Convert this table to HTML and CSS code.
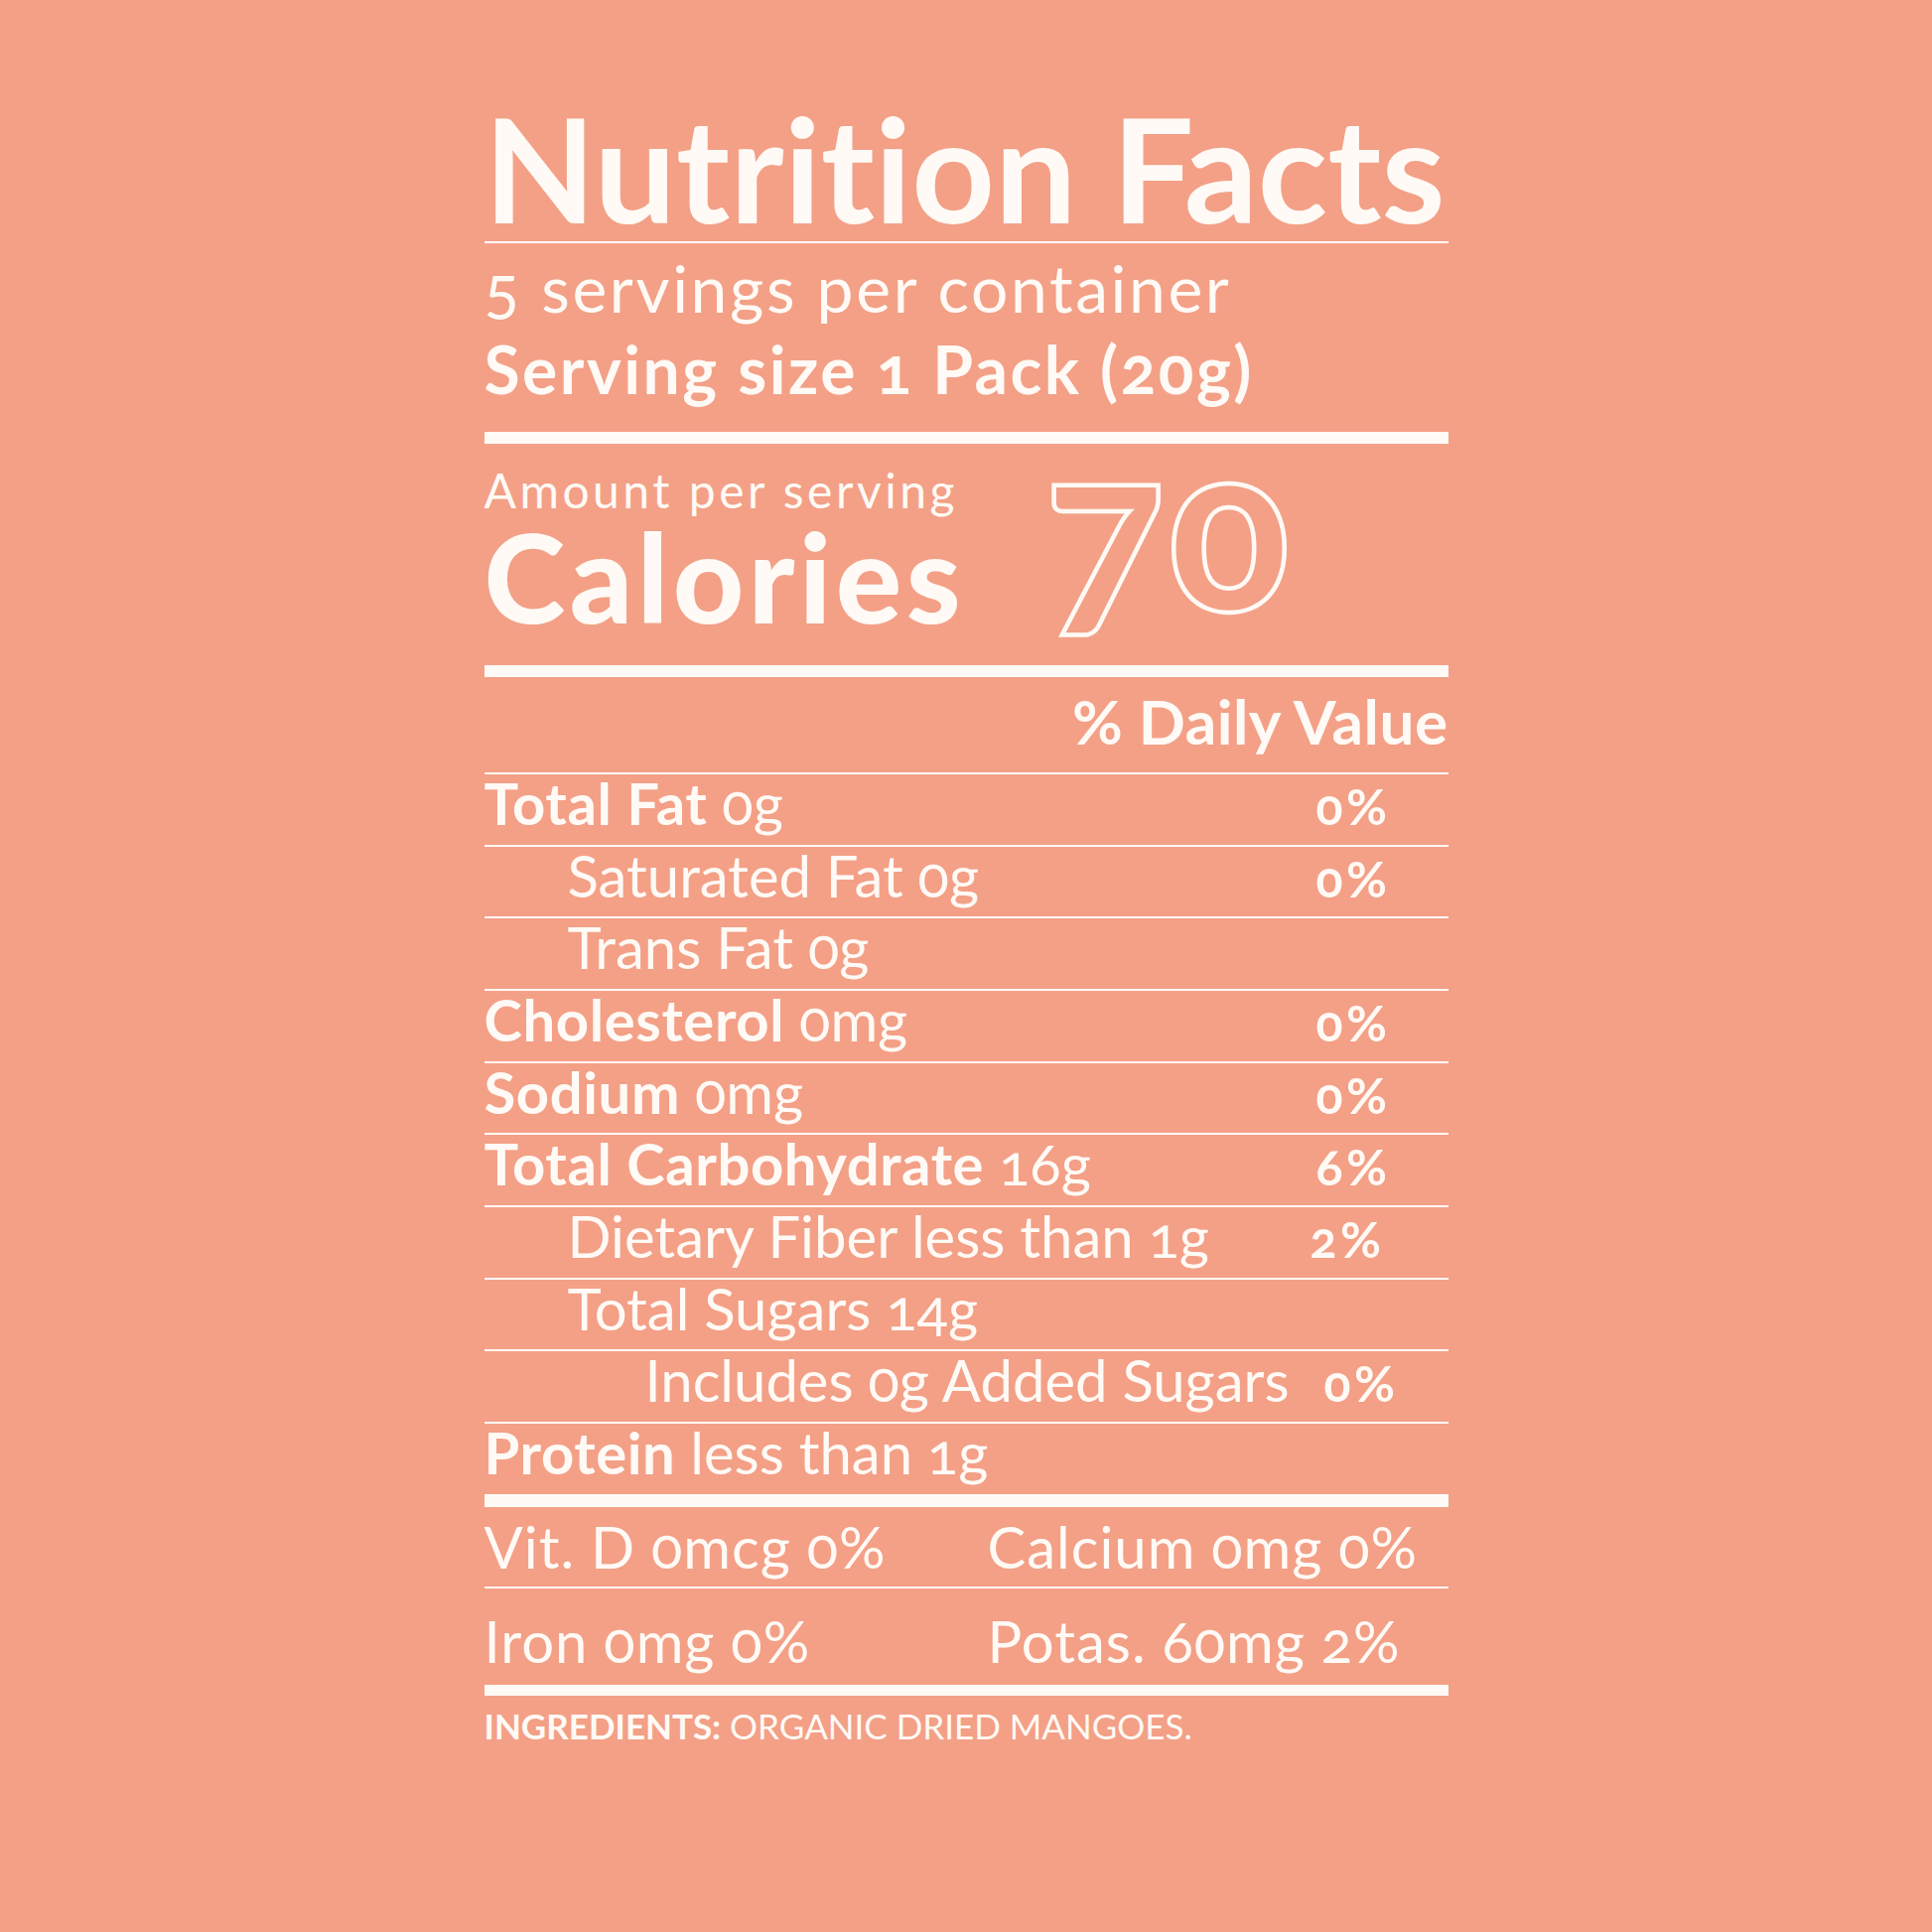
FILE: index.html
```html
<!DOCTYPE html>
<html lang="en">
<head>
<meta charset="utf-8">
<title>Nutrition Facts</title>
<link rel="stylesheet" href="styles.css">
</head>
<body>
<main class="label">
  <h1 class="title">Nutrition Facts</h1>
  <hr class="rule rule-thin rule-title">
  <p class="servings">5 servings per container</p>
  <p class="serving-size">Serving size 1 Pack (20g)</p>
  <hr class="rule rule-thick rule-serv">
  <section class="calories">
    <div class="cal-text">
      <p class="amount">Amount per serving</p>
      <p class="cal-label">Calories</p>
    </div>
    <div class="cal-value">70</div>
  </section>
  <hr class="rule rule-thick rule-cal">
  <p class="dv-head">% Daily Value</p>
  <ul class="nutrients">
    <li class="row"><span class="name"><b>Total Fat</b> 0g</span><span class="pct">0%</span></li>
    <li class="row indent1"><span class="name">Saturated Fat 0g</span><span class="pct">0%</span></li>
    <li class="row indent1"><span class="name">Trans Fat 0g</span><span class="pct"></span></li>
    <li class="row"><span class="name"><b>Cholesterol</b> 0mg</span><span class="pct">0%</span></li>
    <li class="row"><span class="name"><b>Sodium</b> 0mg</span><span class="pct">0%</span></li>
    <li class="row"><span class="name"><b>Total Carbohydrate</b> 16g</span><span class="pct">6%</span></li>
    <li class="row indent1"><span class="name">Dietary Fiber less than 1g</span><span class="pct pct-shift-left">2%</span></li>
    <li class="row indent1"><span class="name">Total Sugars 14g</span><span class="pct"></span></li>
    <li class="row indent2"><span class="name">Includes 0g Added Sugars</span><span class="pct pct-shift-right">0%</span></li>
    <li class="row"><span class="name"><b>Protein</b> less than 1g</span><span class="pct"></span></li>
  </ul>
  <hr class="rule rule-thick rule-prot">
  <div class="minerals">
    <div class="mrow mrow-first"><span class="mcell">Vit. D 0mcg 0%</span><span class="mcell">Calcium 0mg 0%</span></div>
    <div class="mrow mrow-second"><span class="mcell">Iron 0mg 0%</span><span class="mcell">Potas. 60mg 2%</span></div>
  </div>
  <hr class="rule rule-thick rule-min">
  <p class="ingredients"><b>INGREDIENTS:</b> ORGANIC DRIED MANGOES.</p>
</main>
</body>
</html>
```

FILE: styles.css
```css
* { box-sizing: border-box; }
html, body { margin: 0; padding: 0; }
body {
  background: #f3a087;
  color: #fffaf5;
  font-family: "Lato", "Noto Sans", sans-serif;
  font-variant-numeric: oldstyle-nums;
  font-variant-ligatures: none;
  font-feature-settings: "liga" 0, "clig" 0, "dlig" 0, "onum" 1;
}
.label {
  width: 971px;
  margin: 0 auto;
  padding-top: 95.5px;
}
p, h1, ul { margin: 0; padding: 0; }
b { font-weight: 700; }
.rule { border: 0; margin: 0; background: #fffaf5; display: block; }
.rule-thin { height: 2px; }
.rule-thick { height: 12px; }
.title {
  font-size: 146px; line-height: 146px; font-weight: 700; white-space: nowrap;
}
.rule-title { margin-top: 1.5px; }
.servings {
  font-size: 66px; line-height: 64px; margin-top: 12.5px; font-weight: 400; letter-spacing: 2.6px; white-space: nowrap;
}
.serving-size {
  font-size: 66px; line-height: 64px; margin-top: 18px; font-weight: 700; letter-spacing: 2.5px; white-space: nowrap;
}
.rule-serv { margin-top: 31.5px; }
.calories { display: flex; align-items: flex-start; }
.cal-text { width: 565px; }
.amount { font-size: 48px; line-height: 46px; margin-top: 24.4px; letter-spacing: 3.5px; white-space: nowrap; }
.cal-label { font-size: 124px; line-height: 120px; margin-top: 2.6px; font-weight: 900; letter-spacing: 4.5px; }
.cal-value {
  font-size: 224px; line-height: 140px; margin-top: 13.3px; font-weight: 900; letter-spacing: 4px;
  color: transparent; -webkit-text-stroke: 4.5px #fffaf5;
}
.rule-cal { margin-top: 30px; }
.dv-head {
  font-size: 62px; line-height: 62px; margin-top: 13px; font-weight: 700; text-align: right; letter-spacing: 0.5px;
}
.nutrients { list-style: none; margin-top: 21px; }
.row {
  display: grid; grid-template-columns: 838px 1fr; align-items: baseline;
  height: 72.7px; border-top: 2px solid #fffaf5;
  font-size: 58px; line-height: 57.2px; white-space: nowrap;
}
.row b { letter-spacing: 0.6px; }
.indent1 .name { padding-left: 84px; }
.indent2 .name { padding-left: 162px; }
.pct { font-weight: 700; font-size: 50px; letter-spacing: 3.5px; }
.pct-shift-left { margin-left: -6px; }
.pct-shift-right { margin-left: 8px; }
.rule-prot { height: 13px; }
.mrow { display: grid; grid-template-columns: 507px 1fr; font-size: 58px; letter-spacing: 1px; white-space: nowrap; }
.mrow-first { height: 82px; line-height: 80px; border-bottom: 2px solid #fffaf5; }
.mrow-second { height: 97px; padding-top: 11px; line-height: 84px; }
.rule-min { height: 11px; }
.ingredients { font-size: 35px; line-height: 40px; margin-top: 10.5px; letter-spacing: 0; }
```
